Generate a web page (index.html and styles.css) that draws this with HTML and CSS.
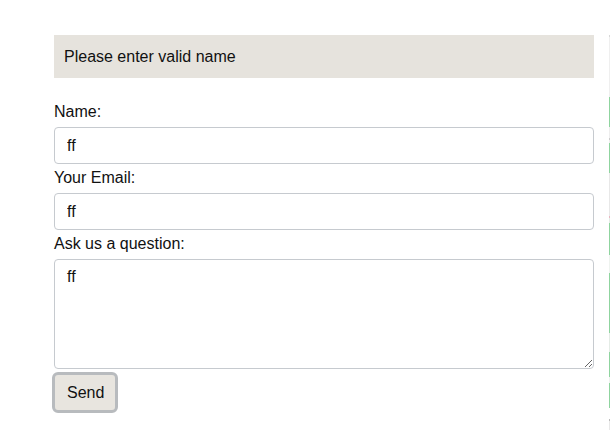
FILE: index.html
```html
<!DOCTYPE html>
<html>
<head>
<meta charset="utf-8">
<link rel="stylesheet" href="styles.css">
</head>
<body>
<div class="page">
  <div class="alert">Please enter valid name</div>
  <form class="form">
    <label class="label" for="name">Name:</label>
    <input class="field" id="name" type="text" value="ff">
    <label class="label" for="email">Your Email:</label>
    <input class="field" id="email" type="text" value="ff">
    <label class="label" for="q">Ask us a question:</label>
    <textarea class="field area" id="q">ff</textarea>
    <button class="send" type="button">Send</button>
  </form>
</div>
<div class="edge"></div>
</body>
</html>
```
FILE: styles.css
```css
html, body {
  margin: 0;
  padding: 0;
  background: #ffffff;
}
body {
  font-family: "Liberation Sans", Arial, sans-serif;
  font-size: 16px;
  color: #111;
}
.page {
  width: 540px;
  margin-left: 54px;
  padding-top: 35px;
}
.alert {
  background: #e6e3dd;
  padding: 12px 10px;
  line-height: 19px;
  color: #111;
}
.form {
  display: flex;
  flex-direction: column;
  align-items: stretch;
  margin-top: 25px;
}
.label {
  display: block;
  line-height: 18px;
  margin: 0 0 6px 0;
}
.field + .label {
  margin-top: 5px;
}
.field {
  box-sizing: border-box;
  width: 540px;
  height: 37px;
  border: 1px solid #c6cacf;
  border-radius: 4px;
  padding: 8px 12px;
  font-family: "Liberation Sans", Arial, sans-serif;
  font-size: 16px;
  line-height: 19px;
  color: #111;
  background: #fff;
  margin: 0;
  outline: none;
}
.area {
  height: 110px;
  padding-top: 7px;
  resize: vertical;
  display: block;
}
.send {
  align-self: flex-start;
  margin: 3px 0 0 -2px;
  background: #e8e5df;
  border: 3px solid #b8bbbe;
  border-radius: 6px;
  padding: 8px 11px 8px 12px;
  font-family: "Liberation Sans", Arial, sans-serif;
  font-size: 16px;
  line-height: 19px;
  color: #111;
}
.edge {
  position: absolute;
  left: 609px;
  top: 35px;
  width: 1px;
  height: 395px;
  background: linear-gradient(to bottom,
    #d8d8d8 0px, #d8d8d8 2px,
    #efefef 2px, #efefef 62px,
    #8fd49f 62px, #8fd49f 92px,
    #eeeeee 92px, #eeeeee 103px,
    #cccccc 103px, #cccccc 105px,
    #eeeeee 105px, #eeeeee 108px,
    #8fd49f 108px, #8fd49f 138px,
    #e8e8e8 138px, #e8e8e8 181px,
    #e9b7c2 181px, #e9b7c2 183px,
    #e4ece6 183px, #e4ece6 188px,
    #8fd49f 188px, #8fd49f 220px,
    #eef3ef 220px, #eef3ef 238px,
    #8fd49f 238px, #8fd49f 298px,
    #e4ece6 298px, #e4ece6 317px,
    #8fd49f 317px, #8fd49f 342px,
    #eef3ef 342px, #eef3ef 348px,
    #8fd49f 348px, #8fd49f 373px,
    #ffffff 373px, #ffffff 384px,
    #bbbbbb 384px, #bbbbbb 386px,
    #e8e8e8 386px, #e8e8e8 395px);
}
```
